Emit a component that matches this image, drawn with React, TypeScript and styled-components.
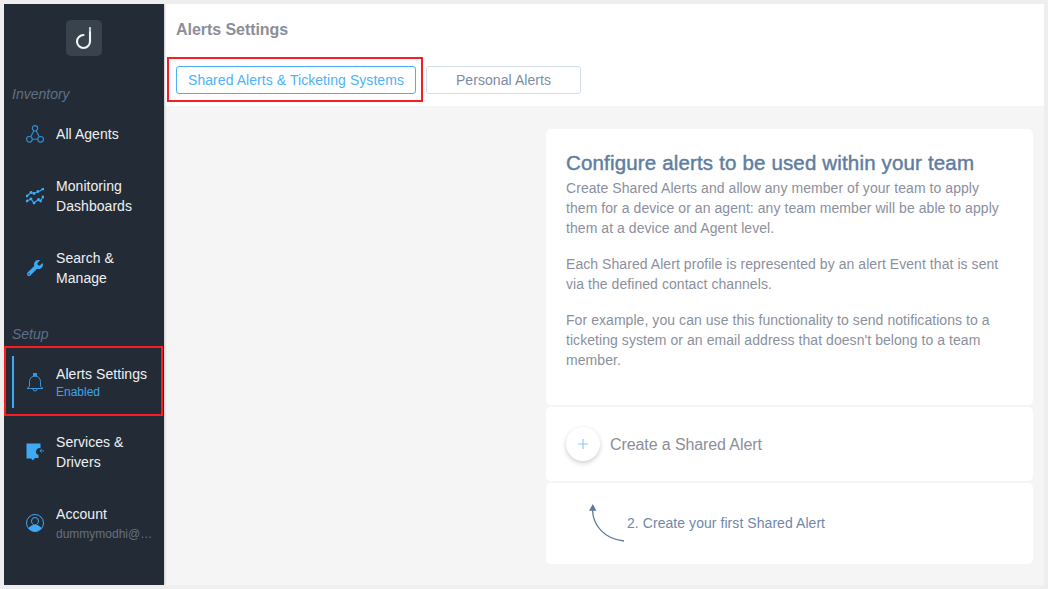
import React from "react";
import styled, { createGlobalStyle } from "styled-components";
import { FaWrench } from "react-icons/fa";

const Global = createGlobalStyle`
  html, body { margin: 0; padding: 0; background: #eeeeee; }
  * { box-sizing: border-box; }
  body { font-family: "Liberation Sans", Arial, sans-serif; }
`;

const Frame = styled.div`
  display: flex;
  width: 1040px;
  height: 581px;
  margin: 4px;
  overflow: hidden;
  background: #f5f5f5;
`;

const Sidebar = styled.nav`
  flex: 0 0 160px;
  width: 160px;
  min-width: 0;
  display: flex;
  flex-direction: column;
  background: #232c36;
  box-shadow: 1px 0 2px rgba(0, 0, 0, 0.18);
  z-index: 1;
`;

const LogoWrap = styled.div`
  display: flex;
  justify-content: center;
  padding: 16px 0 26px;
`;

const LogoBox = styled.div`
  width: 36px;
  height: 36px;
  border-radius: 5px;
  background: #39434e;
  display: flex;
  align-items: center;
  justify-content: center;
`;

const SectionLabel = styled.div<{ $top?: number }>`
  height: 24px;
  margin-top: ${(p) => p.$top ?? 0}px;
  flex: 0 0 24px;
  display: flex;
  align-items: center;
  padding-left: 8px;
  font-size: 14px;
  font-style: italic;
  color: #5f7086;
`;

const Item = styled.div<{ $h: number; $active?: boolean; $nudge?: number }>`
  position: relative;
  height: ${(p) => p.$h}px;
  flex: 0 0 ${(p) => p.$h}px;
  display: flex;
  align-items: center;
  padding-left: 22px;
  padding-top: ${(p) => p.$nudge ?? 0}px;
  ${(p) =>
    p.$active
      ? `
    width: 159px;
    outline: 2px solid #fb1c22;
    outline-offset: -2px;
    &::before {
      content: "";
      position: absolute;
      left: 8px;
      top: 10px;
      bottom: 8px;
      width: 2px;
      background: #3fa9f5;
    }
  `
      : ""}
`;

const IconSlot = styled.div`
  flex: 0 0 18px;
  width: 18px;
  height: 20px;
  margin-right: 12px;
  display: flex;
  align-items: center;
  justify-content: center;
  color: #3fa9f5;
`;

const ItemText = styled.div`
  min-width: 0;
  flex: 1;
  padding-right: 8px;
`;

const ItemTitle = styled.div`
  font-size: 14px;
  line-height: 20px;
  letter-spacing: 0.05px;
  color: #eef1f4;
`;

const ItemSub = styled.div<{ $on?: boolean; $gap?: number }>`
  font-size: 12px;
  line-height: 16px;
  margin-top: ${(p) => p.$gap ?? 0}px;
  color: ${(p) => (p.$on ? "#3fa3e6" : "#66707c")};
  white-space: nowrap;
`;

const Main = styled.main`
  flex: 1;
  min-width: 0;
  margin-left: 1px;
  display: flex;
  flex-direction: column;
`;

const Header = styled.header`
  height: 102px;
  flex: 0 0 102px;
  background: #fff;
  padding: 17px 0 0 11px;
`;

const PageTitle = styled.h1`
  margin: 0;
  font-size: 16px;
  line-height: 18px;
  font-weight: 700;
  letter-spacing: -0.05px;
  color: #8b8e9a;
`;

const Tabs = styled.div`
  display: flex;
  gap: 10px;
  margin-top: 27px;
`;

const TabBox = styled.div<{ $marked?: boolean }>`
  position: relative;
  ${(p) =>
    p.$marked
      ? `
    &::after {
      content: "";
      position: absolute;
      top: -9px;
      left: -9px;
      right: -7px;
      bottom: -8px;
      border: 2px solid #fb1c22;
      pointer-events: none;
    }
  `
      : ""}
`;

const Tab = styled.button<{ $active?: boolean; $w: number }>`
  display: block;
  width: ${(p) => p.$w}px;
  height: 28px;
  padding: 0;
  background: #fff;
  border-radius: 3px;
  border: 1px solid ${(p) => (p.$active ? "#4db0f5" : "#d5dee6")};
  color: ${(p) => (p.$active ? "#4db2fb" : "#7b8ca4")};
  font: 14px "Liberation Sans", Arial, sans-serif;
  letter-spacing: 0.06px;
`;

const Content = styled.div`
  flex: 1;
  display: flex;
  justify-content: flex-end;
  padding: 23px 11px 0 0;
`;

const Column = styled.div`
  width: 487px;
  display: flex;
  flex-direction: column;
  gap: 2px;
`;

const Card = styled.section<{ $h: number }>`
  height: ${(p) => p.$h}px;
  background: #fff;
  border-radius: 5px;
`;

const IntroCard = styled(Card)`
  padding: 22px 30px 0 20px;
`;

const CardTitle = styled.h2`
  margin: 0 -20px 3px 0;
  font-size: 20.5px;
  line-height: 24px;
  font-weight: 400;
  letter-spacing: 0.16px;
  -webkit-text-stroke: 0.45px #5f7e9f;
  color: #5f7e9f;
`;

const Para = styled.p`
  margin: 0 0 16px;
  font-size: 14px;
  line-height: 20px;
  letter-spacing: 0.06px;
  color: #8b909d;
`;

const CreateCard = styled(Card)`
  display: flex;
  align-items: center;
  padding-left: 20px;
  gap: 10px;
`;

const PlusButton = styled.div`
  width: 34px;
  height: 34px;
  border-radius: 50%;
  background: #fff;
  box-shadow: 0 2px 5px rgba(0, 0, 0, 0.2);
  display: flex;
  align-items: center;
  justify-content: center;
`;

const CreateLabel = styled.span`
  padding-top: 2px;
  font-size: 16px;
  letter-spacing: -0.1px;
  color: #8b8e9a;
`;

const HintCard = styled(Card)`
  display: flex;
  align-items: flex-start;
  padding: 20px 0 0 43px;
`;

const HintText = styled.span`
  margin: 11px 0 0 3px;
  font-size: 14px;
  line-height: 18px;
  letter-spacing: 0.06px;
  color: #7088a8;
`;

const Logo = () => (
  <svg width="20" height="24" viewBox="0 0 20 24" fill="none">
    <path d="M16 2V15.5A6.5 6.5 0 1 1 9.5 9" stroke="#f2f4f6" strokeWidth="2.1" strokeLinecap="round" />
    <path d="M16 1.5v4" stroke="#9aa4ae" strokeWidth="1" />
  </svg>
);

const AgentsIcon = () => (
  <svg width="19" height="20" viewBox="0 0 19 20" fill="none" stroke="#2f8fd6" strokeWidth="1.2">
    <circle cx="9.5" cy="4" r="2.8" />
    <circle cx="3.6" cy="15.6" r="3" />
    <circle cx="15.4" cy="15.6" r="3" />
    <path d="M8.3 6.5 5 13M10.7 6.5 14 13M6.6 15.6h5.8" />
  </svg>
);

const MonitorIcon = () => (
  <svg width="18" height="17" viewBox="0 0 18 17" fill="none" stroke="#3fa9f5" strokeWidth="1.1">
    <path d="M1 8 5 4.5 8 5.5 12 3.5 14 3 17 .8" />
    <path d="M1 13 5 11 8 15 12.5 11.5 14.5 13 17 9" />
    <g fill="#3fa9f5" stroke="none">
      <circle cx="1" cy="8" r="1.4" /><circle cx="5" cy="4.5" r="1.4" /><circle cx="8" cy="5.5" r="1.4" />
      <circle cx="12" cy="3.5" r="1.4" /><circle cx="17" cy="1" r="1.4" />
      <circle cx="1" cy="13" r="1.4" /><circle cx="5" cy="11" r="1.4" /><circle cx="8" cy="15" r="1.4" />
      <circle cx="12.5" cy="11.5" r="1.4" /><circle cx="14.5" cy="13" r="1.4" /><circle cx="17" cy="9" r="1.4" />
    </g>
  </svg>
);

const BellIcon = () => (
  <svg width="18" height="19" viewBox="0 0 18 19" fill="none" stroke="#3498db" strokeWidth="1">
    <rect x="7.5" y=".5" width="3" height="2.5" fill="#3498db" />
    <path d="M3.5 13.5V8.5a5.5 5.5 0 0 1 11 0v5l2.5 2H1z" />
    <path d="M7 16a2 2 0 0 0 4 0" />
  </svg>
);

const ServicesIcon = () => (
  <svg width="18" height="18" viewBox="0 0 18 18">
    <path d="M.5.5H14.5V5.2A3.3 3.3 0 0 0 12.5 11.8V15H9L7 17.5 5 15.5H.5z" fill="#3fa9f5" />
    <path d="M18 7.8H14M15.8 6 13.9 7.8 15.8 9.6" stroke="#2f8fd6" strokeWidth="1" fill="none" />
  </svg>
);

const AccountIcon = () => (
  <svg width="18" height="18" viewBox="0 0 18 18" fill="none">
    <circle cx="9" cy="9" r="8.5" stroke="#3fa9f5" strokeWidth="1" />
    <path d="M2.5 14c1.5-2 3.5-2.6 4.5-3h4c1 .4 3 1 4.5 3a8 8 0 0 1-13 0z" fill="#3fa9f5" />
    <path d="M5.5 7a3.5 3.5 0 0 1 7 0c0 2-1.5 4-3.5 4s-3.5-2-3.5-4z" stroke="#3fa9f5" strokeWidth="1" />
  </svg>
);

const ArrowIcon = () => (
  <svg width="35" height="40" viewBox="0 0 35 40" fill="none">
    <path d="M3.5 7C4 22 15 36 35 38" stroke="#5e7a9a" strokeWidth="1.3" />
    <path d="M3.8 1 7.4 7.8H0z" fill="#5e7a9a" />
  </svg>
);

export default function App() {
  return (
    <>
      <Global />
      <Frame>
        <Sidebar>
          <LogoWrap>
            <LogoBox><Logo /></LogoBox>
          </LogoWrap>
          <SectionLabel>Inventory</SectionLabel>
          <Item $h={54} $nudge={2}>
            <IconSlot><AgentsIcon /></IconSlot>
            <ItemText><ItemTitle>All Agents</ItemTitle></ItemText>
          </Item>
          <Item $h={72}>
            <IconSlot><MonitorIcon /></IconSlot>
            <ItemText><ItemTitle>Monitoring Dashboards</ItemTitle></ItemText>
          </Item>
          <Item $h={72}>
            <IconSlot><FaWrench size={16} /></IconSlot>
            <ItemText><ItemTitle>Search &<br />Manage</ItemTitle></ItemText>
          </Item>
          <SectionLabel $top={18}>Setup</SectionLabel>
          <Item $h={70} $active $nudge={2}>
            <IconSlot><BellIcon /></IconSlot>
            <ItemText>
              <ItemTitle>Alerts Settings</ItemTitle>
              <ItemSub $on>Enabled</ItemSub>
            </ItemText>
          </Item>
          <Item $h={72}>
            <IconSlot><ServicesIcon /></IconSlot>
            <ItemText><ItemTitle>Services &<br />Drivers</ItemTitle></ItemText>
          </Item>
          <Item $h={70}>
            <IconSlot><AccountIcon /></IconSlot>
            <ItemText>
              <ItemTitle>Account</ItemTitle>
              <ItemSub $gap={2}>dummymodhi@…</ItemSub>
            </ItemText>
          </Item>
        </Sidebar>
        <Main>
          <Header>
            <PageTitle>Alerts Settings</PageTitle>
            <Tabs>
              <TabBox $marked>
                <Tab $active $w={240}>Shared Alerts & Ticketing Systems</Tab>
              </TabBox>
              <TabBox>
                <Tab $w={155}>Personal Alerts</Tab>
              </TabBox>
            </Tabs>
          </Header>
          <Content>
            <Column>
              <IntroCard $h={276}>
                <CardTitle>Configure alerts to be used within your team</CardTitle>
                <Para>Create Shared Alerts and allow any member of your team to apply them for a device or an agent: any team member will be able to apply them at a device and Agent level.</Para>
                <Para>Each Shared Alert profile is represented by an alert Event that is sent via the defined contact channels.</Para>
                <Para>For example, you can use this functionality to send notifications to a ticketing system or an email address that doesn't belong to a team member.</Para>
              </IntroCard>
              <CreateCard $h={74}>
                <PlusButton>
                  <svg width="12" height="12" viewBox="0 0 12 12"><path d="M6 1v10M1 6h10" stroke="#8fcbf6" strokeWidth="1.2" /></svg>
                </PlusButton>
                <CreateLabel>Create a Shared Alert</CreateLabel>
              </CreateCard>
              <HintCard $h={81}>
                <ArrowIcon />
                <HintText>2. Create your first Shared Alert</HintText>
              </HintCard>
            </Column>
          </Content>
        </Main>
      </Frame>
    </>
  );
}
